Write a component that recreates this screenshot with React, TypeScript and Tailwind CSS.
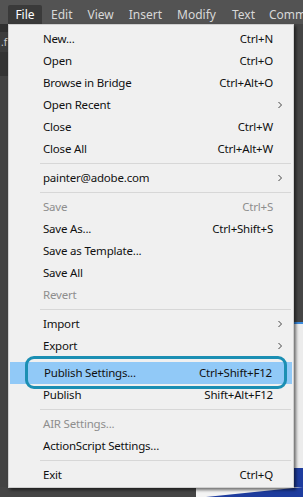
import React from "react";

type Item =
  | { type: "sep" }
  | { type: "item"; label: string; shortcut?: string; sub?: boolean; disabled?: boolean; hl?: boolean };

const items: Item[] = [
  { type: "item", label: "New...", shortcut: "Ctrl+N" },
  { type: "item", label: "Open", shortcut: "Ctrl+O" },
  { type: "item", label: "Browse in Bridge", shortcut: "Ctrl+Alt+O" },
  { type: "item", label: "Open Recent", sub: true },
  { type: "item", label: "Close", shortcut: "Ctrl+W" },
  { type: "item", label: "Close All", shortcut: "Ctrl+Alt+W" },
  { type: "sep" },
  { type: "item", label: "painter@adobe.com", sub: true },
  { type: "sep" },
  { type: "item", label: "Save", shortcut: "Ctrl+S", disabled: true },
  { type: "item", label: "Save As...", shortcut: "Ctrl+Shift+S" },
  { type: "item", label: "Save as Template..." },
  { type: "item", label: "Save All" },
  { type: "item", label: "Revert", disabled: true },
  { type: "sep" },
  { type: "item", label: "Import", sub: true },
  { type: "item", label: "Export", sub: true },
  { type: "item", label: "Publish Settings...", shortcut: "Ctrl+Shift+F12", hl: true },
  { type: "item", label: "Publish", shortcut: "Shift+Alt+F12" },
  { type: "sep" },
  { type: "item", label: "AIR Settings...", disabled: true },
  { type: "item", label: "ActionScript Settings..." },
  { type: "sep" },
  { type: "item", label: "Exit", shortcut: "Ctrl+Q" },
];

function Chevron() {
  return (
    <svg width="6" height="8" viewBox="0 0 6 8" className="block">
      <path d="M1.5 1 L4.5 4 L1.5 7" fill="none" stroke="#444" strokeWidth="1" />
    </svg>
  );
}

export default function App() {
  const font = { fontFamily: "'Noto Sans', 'Open Sans', sans-serif" };
  return (
    <div className="relative w-[303px] h-[497px] overflow-hidden bg-[#454545]" style={font}>
      {/* menu bar */}
      <div className="flex h-[24px] items-end overflow-hidden bg-[#535353] text-[12px] text-[#d8d8d8]">
        <div className="ml-[8px] flex h-[19px] w-[34px] shrink-0 items-center justify-center rounded-t-[2px] bg-[#3a3a3a] text-white">File</div>
        <div className="ml-[9px] flex h-[19px] shrink-0 items-center">Edit</div>
        <div className="ml-[15px] flex h-[19px] shrink-0 items-center">View</div>
        <div className="ml-[15px] flex h-[19px] shrink-0 items-center">Insert</div>
        <div className="ml-[15px] flex h-[19px] shrink-0 items-center">Modify</div>
        <div className="ml-[16px] flex h-[19px] shrink-0 items-center">Text</div>
        <div className="ml-[14px] flex h-[19px] shrink-0 items-center whitespace-nowrap">Comm</div>
      </div>

      {/* underlying workspace */}
      <div className="flex h-[473px]">
        <div className="flex w-[12px] flex-col bg-[#3c3c3c]">
          <div className="h-[8px] bg-[#2f2f2f]" />
          <div className="flex h-[20px] items-center pl-[1px] text-[10px] text-[#cfcfcf]">.f</div>
          <div className="h-[24px] bg-[#333]" />
          <div className="flex-1 bg-[#424242]" />
        </div>
        <div className="flex flex-1 flex-col">
          <div className="h-[298px] bg-[#454545]" />
          <div className="h-[2px] bg-[#3a8be0]" />
          <div className="h-[144px] bg-[#ececec]" />
          <div className="flex-1 bg-[#1e3c9e]" />
        </div>
      </div>
      <div className="absolute left-0 bottom-0 flex h-[10px] w-[303px]">
        <div className="w-[196px] bg-[#454545]" />
        <div className="flex-1 bg-[#f4f4f4]">
          <svg width="107" height="10" viewBox="0 0 107 10" className="block">
            <polygon points="10,10 107,0 107,10" fill="#1e3c9e" />
          </svg>
        </div>
      </div>

      {/* dropdown menu */}
      <div className="absolute left-[8px] top-[24px] w-[286px] border border-[#cfcfcf] bg-[#f0f0f0] pt-[3px] pb-[1px] text-[11.5px] tracking-[-0.2px] text-[#111] shadow-[2px_2px_3px_rgba(0,0,0,0.55)]">
        {items.map((it, i) =>
          it.type === "sep" ? (
            <div key={i} className="flex h-[7px] items-center pl-[31px] pr-[2px]">
              <div className="h-[1px] w-full bg-[#d7d7d7]" />
            </div>
          ) : (
            <div
              key={i}
              className={
                "relative flex h-[22px] items-center pl-[34px] pr-[20px] " +
                (it.hl ? "mx-[1px] mt-[5px] bg-[#91c9f7] " : "") +
                (it.disabled ? "text-[#8e8e8e]" : "")
              }
            >
              <span className="flex-1 whitespace-nowrap">{it.label}</span>
              {it.shortcut && <span className="whitespace-nowrap">{it.shortcut}</span>}
              {it.sub && (
                <span className="absolute right-[10px] top-[7px]">
                  <Chevron />
                </span>
              )}
            </div>
          )
        )}
      </div>

      {/* callout ring */}
      <div className="absolute left-[25px] top-[356px] h-[33px] w-[262px] rounded-[9px] border-[3px] border-[#1b8fb3]" />
    </div>
  );
}
